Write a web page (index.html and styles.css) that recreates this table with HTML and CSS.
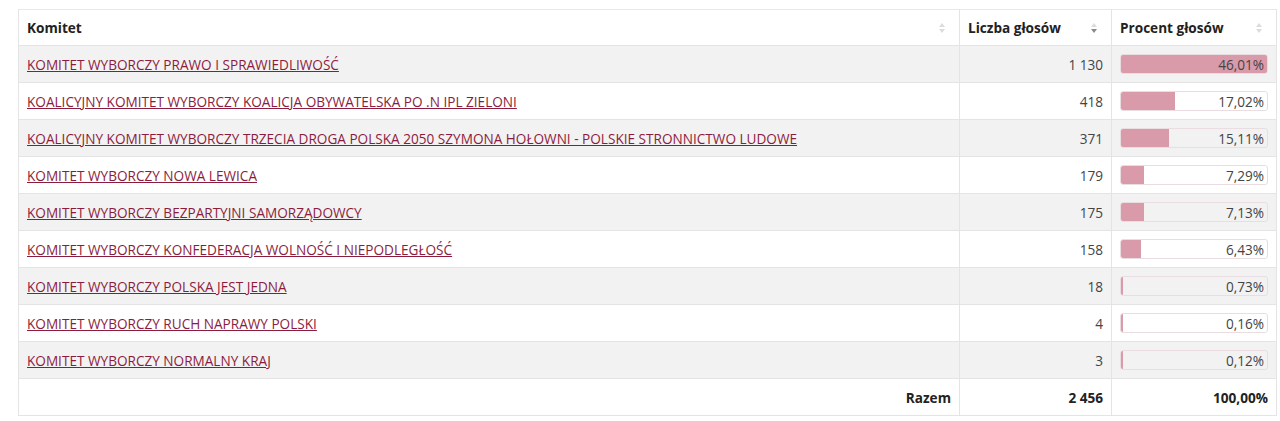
FILE: index.html
```html
<!DOCTYPE html>
<html lang="pl">
<head>
<meta charset="utf-8">
<link rel="stylesheet" href="styles.css">
</head>
<body>
<div class="wrap">
<table class="results">
  <thead>
    <tr>
      <th class="col-name"><span class="th-in">Komitet<span class="sort"><i class="up"></i><i class="down"></i></span></span></th>
      <th class="col-votes"><span class="th-in">Liczba głosów<span class="sort active-down"><i class="up"></i><i class="down"></i></span></span></th>
      <th class="col-pct"><span class="th-in">Procent głosów<span class="sort"><i class="up"></i><i class="down"></i></span></span></th>
    </tr>
  </thead>
  <tbody>
    <tr><td><a href="#">KOMITET WYBORCZY PRAWO I SPRAWIEDLIWOŚĆ</a></td><td class="num">1 130</td><td><div class="bar"><div class="fill" style="width:100%"></div><span>46,01%</span></div></td></tr>
    <tr><td><a href="#">KOALICYJNY KOMITET WYBORCZY KOALICJA OBYWATELSKA PO .N IPL ZIELONI</a></td><td class="num">418</td><td><div class="bar"><div class="fill" style="width:36.99%"></div><span>17,02%</span></div></td></tr>
    <tr><td><a href="#">KOALICYJNY KOMITET WYBORCZY TRZECIA DROGA POLSKA 2050 SZYMONA HOŁOWNI - POLSKIE STRONNICTWO LUDOWE</a></td><td class="num">371</td><td><div class="bar"><div class="fill" style="width:32.84%"></div><span>15,11%</span></div></td></tr>
    <tr><td><a href="#">KOMITET WYBORCZY NOWA LEWICA</a></td><td class="num">179</td><td><div class="bar"><div class="fill" style="width:15.84%"></div><span>7,29%</span></div></td></tr>
    <tr><td><a href="#">KOMITET WYBORCZY BEZPARTYJNI SAMORZĄDOWCY</a></td><td class="num">175</td><td><div class="bar"><div class="fill" style="width:15.5%"></div><span>7,13%</span></div></td></tr>
    <tr><td><a href="#">KOMITET WYBORCZY KONFEDERACJA WOLNOŚĆ I NIEPODLEGŁOŚĆ</a></td><td class="num">158</td><td><div class="bar"><div class="fill" style="width:13.98%"></div><span>6,43%</span></div></td></tr>
    <tr><td><a href="#">KOMITET WYBORCZY POLSKA JEST JEDNA</a></td><td class="num">18</td><td><div class="bar"><div class="fill" style="width:1.59%"></div><span>0,73%</span></div></td></tr>
    <tr><td><a href="#">KOMITET WYBORCZY RUCH NAPRAWY POLSKI</a></td><td class="num">4</td><td><div class="bar"><div class="fill" style="width:0.35%"></div><span>0,16%</span></div></td></tr>
    <tr><td><a href="#">KOMITET WYBORCZY NORMALNY KRAJ</a></td><td class="num">3</td><td><div class="bar"><div class="fill" style="width:0.26%"></div><span>0,12%</span></div></td></tr>
  </tbody>
  <tfoot>
    <tr><td class="num strong">Razem</td><td class="num strong">2 456</td><td class="num strong">100,00%</td></tr>
  </tfoot>
</table>
</div>
</body>
</html>
```
FILE: styles.css
```css
html, body {
  margin: 0;
  padding: 0;
  background: #fff;
}
body {
  font-family: "Open Sans", "Liberation Sans", sans-serif;
  font-size: 13.6px;
  color: #444;
}
.wrap {
  padding: 9px 3px 0 18px;
}
.results {
  width: 1259px;
  border-collapse: collapse;
  border: 1px solid #e4e4e4;
}
.results th,
.results td {
  height: 37px;
  padding: 0 8px;
  border: 1px solid #e4e4e4;
  border-top-color: #e8e8e8;
  vertical-align: middle;
  box-sizing: border-box;
}
.results th {
  height: 36px;
  text-align: left;
  font-weight: 700;
  color: #222;
  background: #fff;
}
.col-name { width: auto; }
.col-votes { width: 152px; }
.col-pct { width: 165px; }
.th-in {
  display: flex;
  align-items: center;
  justify-content: space-between;
}
.sort {
  display: flex;
  flex-direction: column;
  gap: 2px;
  margin-right: 6px;
}
.sort i {
  display: block;
  width: 0;
  height: 0;
  border-left: 3px solid transparent;
  border-right: 3px solid transparent;
}
.sort .up { border-bottom: 4px solid #dcdcdc; }
.sort .down { border-top: 4px solid #dcdcdc; }
.sort.active-down .down { border-top-color: #8a8a8a; }
.results tbody tr:nth-child(odd) td { background: #f2f2f2; }
.results tbody tr:nth-child(even) td { background: #fff; }
.results a {
  color: #8c1c3e;
  text-decoration: underline;
}
.num { text-align: right; }
.strong { font-weight: 700; color: #222; }
.bar {
  position: relative;
  height: 20px;
  border: 1px solid #eadde1;
  border-radius: 3px;
  box-sizing: border-box;
  overflow: hidden;
  display: flex;
  align-items: center;
  justify-content: flex-end;
}
.fill {
  position: absolute;
  left: 0;
  top: 0;
  bottom: 0;
  min-width: 2px;
  background: #d99aaa;
}
.bar span {
  position: relative;
  padding-right: 3px;
}
```
